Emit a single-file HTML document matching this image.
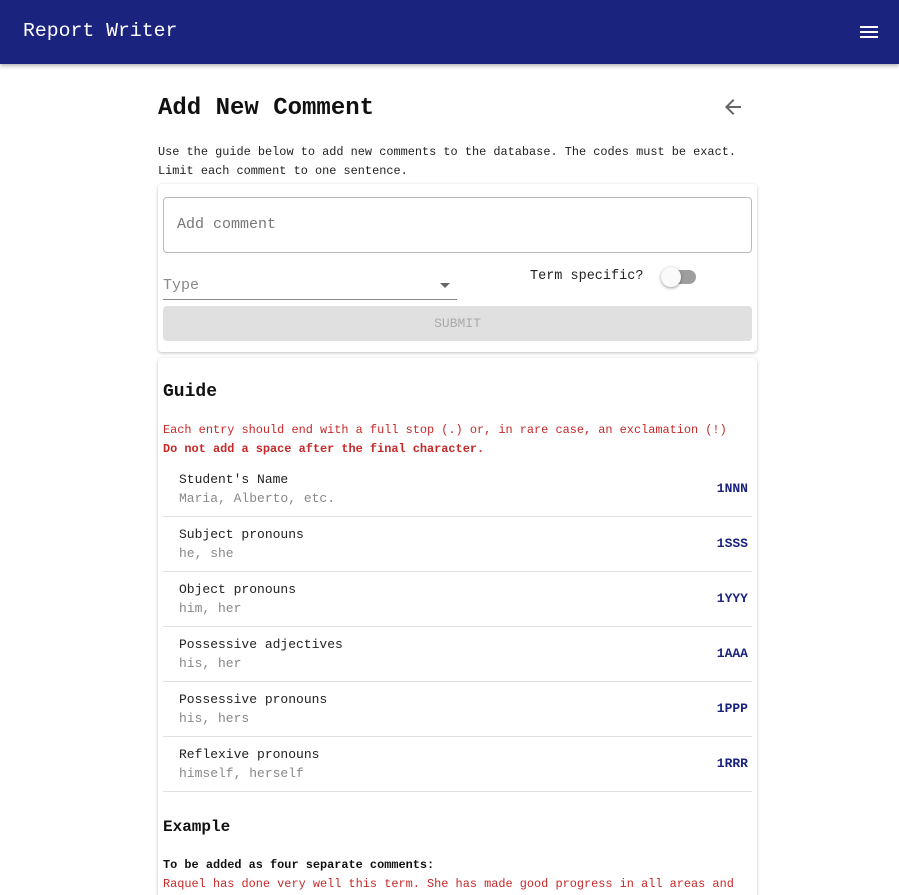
<!DOCTYPE html>
<html style="width:899px;height:895px;overflow:hidden"><head><meta charset="utf-8"><style>
*{box-sizing:border-box;margin:0;padding:0}
body{width:899px;height:895px;overflow:hidden;background:#fff;font-family:"Liberation Mono",monospace;color:#222;position:relative}
.bar{position:absolute;left:0;top:0;width:899px;height:64px;background:#1a237e;box-shadow:0 2px 4px rgba(0,0,0,.3)}
.bar .t{position:absolute;left:23px;top:20px;font-family:"Liberation Mono",monospace;color:#fff;font-size:19.8px}
.ham{position:absolute;left:860px;width:18px;height:2px;background:#fff}
.abs{position:absolute;white-space:nowrap}
.card{position:absolute;background:#fff;border-radius:4px;box-shadow:0 1px 3px rgba(0,0,0,.25)}
.row{position:absolute;left:163px;width:589px;height:55px;border-bottom:1px solid #e0e0e0}
.row .a{position:absolute;left:16px;top:10px;font-size:13px;color:#222}
.row .b{position:absolute;left:16px;top:29px;font-size:13px;color:#888}
.row .c{position:absolute;right:4px;top:19px;font-size:13px;font-weight:bold;color:#1a237e}
</style></head><body>
<div class="bar"><div class="t">Report Writer</div>
<div class="ham" style="top:26px"></div><div class="ham" style="top:31px"></div><div class="ham" style="top:36px"></div></div>
<div class="abs" style="left:158px;top:95px;font-size:24px;font-weight:bold;color:#111">Add New Comment</div>
<svg class="abs" style="left:721px;top:95px" width="24" height="24" viewBox="0 0 24 24"><path d="M20 11H7.8l5.6-5.6L12 4l-8 8 8 8 1.4-1.4L7.8 13H20z" fill="#666"/></svg>
<div class="abs" style="left:158px;top:143px;font-size:11.9px;line-height:19px">Use the guide below to add new comments to the database. The codes must be exact.<br>Limit each comment to one sentence.</div>
<div class="card" style="left:158px;top:184px;width:599px;height:168px"></div>
<div class="abs" style="left:163px;top:197px;width:589px;height:56px;border:1px solid #bbb;border-radius:4px"></div>
<div class="abs" style="left:177px;top:216px;font-size:15px;color:#777">Add comment</div>
<div class="abs" style="left:163px;top:277px;font-size:15px;color:#888">Type</div>
<div class="abs" style="left:163px;top:299px;width:294px;height:1px;background:#888"></div>
<div class="abs" style="left:440px;top:283px;width:0;height:0;border-left:5px solid transparent;border-right:5px solid transparent;border-top:5px solid #666"></div>
<div class="abs" style="left:530px;top:269px;font-size:13.5px">Term specific?</div>
<div class="abs" style="left:664px;top:270px;width:32px;height:14px;border-radius:7px;background:#9e9e9e"></div>
<div class="abs" style="left:661px;top:267px;width:20px;height:20px;border-radius:50%;background:#fafafa;box-shadow:0 1px 3px rgba(0,0,0,.4)"></div>
<div class="abs" style="left:163px;top:306px;width:589px;height:35px;background:#e0e0e0;border-radius:4px;text-align:center;line-height:35px;font-size:13px;color:#aaa">SUBMIT</div>
<div class="card" style="left:158px;top:358px;width:599px;height:560px"></div>
<div class="abs" style="left:163px;top:382px;font-size:18px;font-weight:bold;color:#111">Guide</div>
<div class="abs" style="left:163px;top:421px;font-size:11.9px;line-height:19px;color:#c62828">Each entry should end with a full stop (.) or, in rare case, an exclamation (!)<br><b>Do not add a space after the final character.</b></div>
<div class="row" style="top:462px"><div class="a">Student's Name</div><div class="b">Maria, Alberto, etc.</div><div class="c">1NNN</div></div>
<div class="row" style="top:517px"><div class="a">Subject pronouns</div><div class="b">he, she</div><div class="c">1SSS</div></div>
<div class="row" style="top:572px"><div class="a">Object pronouns</div><div class="b">him, her</div><div class="c">1YYY</div></div>
<div class="row" style="top:627px"><div class="a">Possessive adjectives</div><div class="b">his, her</div><div class="c">1AAA</div></div>
<div class="row" style="top:682px"><div class="a">Possessive pronouns</div><div class="b">his, hers</div><div class="c">1PPP</div></div>
<div class="row" style="top:737px"><div class="a">Reflexive pronouns</div><div class="b">himself, herself</div><div class="c">1RRR</div></div>
<div class="abs" style="left:163px;top:818px;font-size:16px;font-weight:bold;color:#111">Example</div>
<div class="abs" style="left:163px;top:858px;font-size:11.9px;font-weight:bold;color:#111">To be added as four separate comments:</div>
<div class="abs" style="left:163px;top:877px;font-size:11.9px;color:#c62828">Raquel has done very well this term. She has made good progress in all areas and</div>
</body></html>
